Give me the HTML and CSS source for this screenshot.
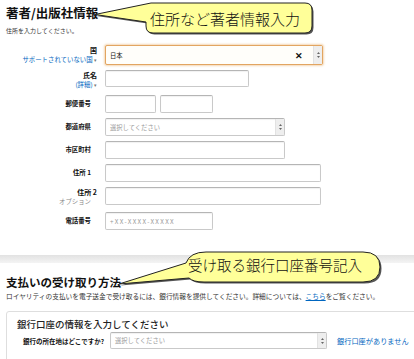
FILE: index.html
```html
<!DOCTYPE html>
<html lang="ja">

<head>
    <meta charset="UTF-8">
    <title>著者/出版社情報</title>
    <link rel="stylesheet" href="styles.css">
</head>

<body>
    <div class="page">
        <section class="author">
            <h1 class="title">著者/出版社情報</h1>
            <p class="lead">住所を入力してください。</p>

            <div class="form">
                <div class="row">
                    <div class="label two">
                        <span class="main">国</span>
                        <span class="sub"><a href="#">サポートされていない国</a> <i class="caret">▾</i></span>
                    </div>
                    <div class="field focus w-country">
                        <span class="value">日本</span>
                        <span class="clear">✕</span>
                        <span class="spin"><svg width="3" height="6" viewBox="0 0 3 6"><path d="M1.5 0 L3 2 H0 Z M1.5 6 L3 4 H0 Z" fill="#666"/></svg></span>
                    </div>
                </div>
                <div class="row">
                    <div class="label two">
                        <span class="main">氏名</span>
                        <span class="sub"><a href="#">(詳細)</a> <i class="caret">▾</i></span>
                    </div>
                    <div class="field w-name"></div>
                </div>
                <div class="row">
                    <div class="label">郵便番号</div>
                    <div class="zip">
                        <div class="field w-zip"></div>
                        <div class="field w-zip2"></div>
                    </div>
                </div>
                <div class="row">
                    <div class="label">都道府県</div>
                    <div class="field select w-pref">
                        <span class="placeholder">選択してください</span>
                        <span class="spin"><svg width="3" height="6" viewBox="0 0 3 6"><path d="M1.5 0 L3 2 H0 Z M1.5 6 L3 4 H0 Z" fill="#666"/></svg></span>
                    </div>
                </div>
                <div class="row">
                    <div class="label">市区町村</div>
                    <div class="field w-city"></div>
                </div>
                <div class="row">
                    <div class="label">住所 1</div>
                    <div class="field w-addr"></div>
                </div>
                <div class="row">
                    <div class="label two">
                        <span class="main">住所 2</span>
                        <span class="sub gray">オプション</span>
                    </div>
                    <div class="field w-addr"></div>
                </div>
                <div class="row">
                    <div class="label">電話番号</div>
                    <div class="field w-phone"><span class="placeholder phone">+XX-XXXX-XXXXX</span></div>
                </div>
            </div>
        </section>

        <div class="band"></div>

        <section class="payment">
            <h2 class="heading">支払いの受け取り方法</h2>
            <p class="desc">ロイヤリティの支払いを電子送金で受け取るには、銀行情報を提供してください。詳細については、<a href="#">こちら</a>をご覧ください。</p>

            <div class="bank">
                <h3 class="bank-title">銀行口座の情報を入力してください</h3>
                <div class="bank-row">
                    <span class="bank-label">銀行の所在地はどこですか?</span>
                    <div class="field select w-bank">
                        <span class="placeholder">選択してください</span>
                        <span class="spin"><svg width="3" height="6" viewBox="0 0 3 6"><path d="M1.5 0 L3 2 H0 Z M1.5 6 L3 4 H0 Z" fill="#666"/></svg></span>
                    </div>
                    <a href="#" class="no-account">銀行口座がありません</a>
                </div>
            </div>
        </section>

        <!-- 吹き出し -->
        <svg class="notes" width="414" height="359" viewBox="0 0 414 359">
            <g transform="translate(1.5 1.5)" fill="#555">
                <path d="M146 22 L95 14.5 L151 3 H305 Q312 3 312 10 V26 Q312 33 305 33 H153 Q146 33 146 26 Z"/>
                <path d="M186 263 Q190 252 206 252 H363 Q380 252 380 267 Q380 282 363 282 H204 Q193 282 189 278 L119 284 Z"/>
            </g>
            <g fill="#ffff99" stroke="#222" stroke-width="1">
                <path d="M146 22 L95 14.5 L151 3 H305 Q312 3 312 10 V26 Q312 33 305 33 H153 Q146 33 146 26 Z"/>
                <path d="M186 263 Q190 252 206 252 H363 Q380 252 380 267 Q380 282 363 282 H204 Q193 282 189 278 L119 284 Z"/>
            </g>
            <text x="150" y="24.5" class="note-text" font-size="15">住所など著者情報入力</text>
            <text x="188" y="270.5" class="note-text" font-size="14.5">受け取る銀行口座番号記入</text>
        </svg>
    </div>
</body>

</html>
```

FILE: styles.css
```css
* {
    margin: 0;
    padding: 0;
    box-sizing: border-box;
}

body {
    font-family: "Noto Sans CJK JP", "Noto Sans", sans-serif;
    color: #111;
    background-color: #fff;
}

a {
    color: #0066c0;
    text-decoration: none;
}

.page {
    position: relative;
    width: 414px;
    height: 359px;
    overflow: hidden;
}

/* 著者/出版社情報 */
.author {
    padding: 6px 0 0 6px;
}

.title {
    font-size: 12.5px;
    line-height: 13px;
    font-weight: 700;
}

.lead {
    margin-top: 8px;
    font-size: 6px;
    line-height: 7px;
    color: #333;
}

.form {
    margin-top: 11px;
    display: flex;
    flex-direction: column;
    gap: 5px;
}

.row {
    display: flex;
    gap: 8px;
    align-items: flex-start;
}

.label {
    width: 91px;
    padding-right: 6px;
    text-align: right;
    font-size: 6.4px;
    line-height: 18px;
    font-weight: 700;
}

.label.two {
    padding-right: 0;
    line-height: 10px;
    min-height: 20px;
}

.label .main,
.label .sub {
    display: block;
}

.label .main {
    font-size: 7px;
}

.label .sub {
    font-size: 6.4px;
    font-weight: 400;
}

.label .sub.gray {
    padding-right: 6px;
    color: #888;
}

.caret {
    font-style: normal;
    color: #777;
    font-size: 5px;
}

.field {
    height: 18px;
    border: 1px solid #c9c9c9;
    border-top-color: #b5b5b5;
    border-radius: 2px;
    box-shadow: inset 0 1px 1px rgba(0, 0, 0, 0.06);
    display: flex;
    align-items: center;
    padding-left: 4px;
    font-size: 6.3px;
    background-color: #fff;
}

.field.focus {
    height: 20px;
    border-color: #e2a561;
    box-shadow: 0 0 2px 1px rgba(228, 167, 90, 0.45);
    background-color: #fffefa;
}

.value {
    flex: 1;
}

.clear {
    font-size: 8.5px;
    font-weight: 700;
    margin-right: 10px;
}

.spin {
    align-self: stretch;
    width: 9px;
    display: flex;
    align-items: center;
    justify-content: center;
    background-color: #eee;
    border-left: 1px solid #e2e2e2;
}

.select .placeholder {
    flex: 1;
}

.placeholder {
    color: #9a9a9a;
}

.placeholder.phone {
    letter-spacing: 1.3px;
}

.zip {
    display: flex;
    gap: 4px;
}

.w-country { width: 218px; }
.w-name { width: 144px; height: 17px; }
.w-zip { width: 51px; }
.w-zip2 { width: 53px; }
.w-pref { width: 180px; }
.w-city { width: 180px; }
.w-addr { width: 216px; }
.w-phone { width: 108px; }

.band {
    margin-top: 25px;
    height: 8px;
    background: linear-gradient(#e2e2e2, #f4f4f4);
}

/* 支払いの受け取り方法 */
.payment {
    padding: 0 0 0 6px;
}

.heading {
    margin-top: 13px;
    font-size: 11.5px;
    line-height: 12px;
    font-weight: 700;
}

.desc {
    margin-top: 4px;
    font-size: 6.7px;
    line-height: 8px;
    color: #333;
    white-space: nowrap;
}

.desc a {
    text-decoration: underline;
}

.bank {
    margin-top: 11px;
    width: 420px;
    height: 60px;
    border: 1px solid #dedede;
    border-radius: 3px;
    padding: 7px 0 0 10px;
}

.bank-title {
    font-size: 9.5px;
    line-height: 11px;
    font-weight: 500;
    color: #222;
}

.bank-row {
    margin-top: 2px;
    display: flex;
    align-items: center;
}

.bank-label {
    width: 93px;
    padding-left: 6px;
    font-size: 6.5px;
    font-weight: 700;
}

.w-bank {
    width: 217px;
    height: 17px;
}

.no-account {
    margin-left: 10px;
    font-size: 7.2px;
}

/* 吹き出し */
.notes {
    position: absolute;
    top: 0;
    left: 0;
    pointer-events: none;
}

.note-text {
    font-family: "Noto Sans CJK JP", sans-serif;
    font-weight: 300;
    fill: #111;
}
```
